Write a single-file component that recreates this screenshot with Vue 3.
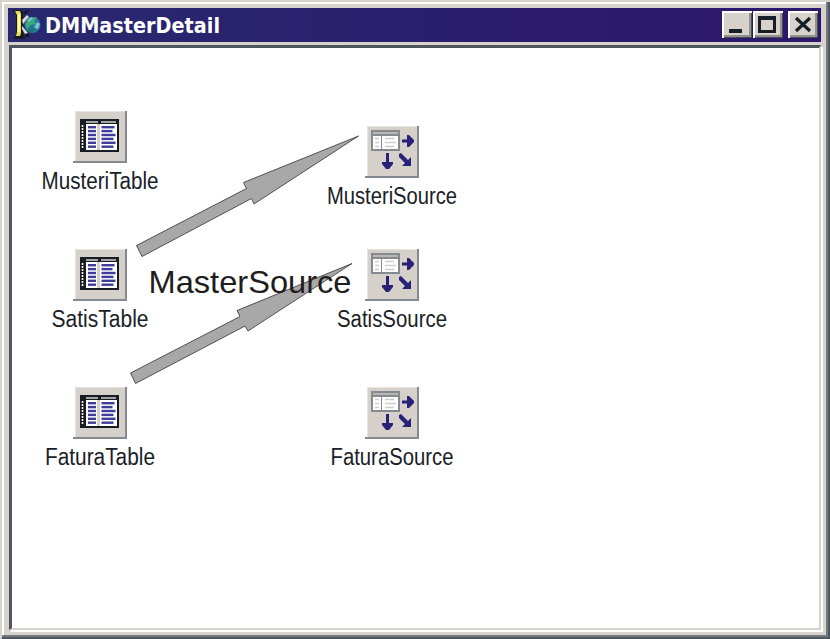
<script setup>
const nodes = [
  { name: 'MusteriTable', kind: 'table', x: 25, y: 111, w: 117 },
  { name: 'SatisTable', kind: 'table', x: 25, y: 249, w: 97 },
  { name: 'FaturaTable', kind: 'table', x: 25, y: 387, w: 110 },
  { name: 'MusteriSource', kind: 'source', x: 317, y: 126, w: 130 },
  { name: 'SatisSource', kind: 'source', x: 317, y: 249, w: 110 },
  { name: 'FaturaSource', kind: 'source', x: 317, y: 387, w: 123 },
]
// Right-hand column line lengths of the table glyph
const rows = [13, 11, 14, 12, 14, 12]
</script>

<template>
  <div class="window">
    <header class="titlebar">
      <svg class="logo" width="30" height="32" viewBox="0 0 30 32">
        <path d="M-1 2h9l2 3v21l2 3v2H0l3-4V6z" fill="#171a22" />
        <path d="M2 3h5l1 3v19l-1 3H3l1-4V7z" fill="#e6df50" />
        <path d="M5 6h2v18H5z" fill="#fff9a0" />
        <path d="M10 5l3-3h4l-5 5zM11 23l2-1 4 7h-4z" fill="#171a22" />
        <path d="M9 12l5-5 2 2-6 7zM9 18l6 7-3 1-3-5z" fill="#dcdccf" />
        <circle cx="19.500" cy="17" r="8" fill="#2877a8" />
        <path d="M12 16l5-6 7-1-3 4 2 3-6 1-2 4-2-3z" fill="#3dac75" />
        <path d="M14 12l4-3 2 1-4 4zM24 14l3 2-2 5-4-1z" fill="#73c9ce" />
        <path d="M17 19l6 1-4 5-4-2z" fill="#187b66" />
      </svg>
      <svg class="caption" width="190" height="34">
        <text x="0" y="24.500" textLength="175" lengthAdjust="spacingAndGlyphs">DMMasterDetail</text>
      </svg>
      <div class="buttons">
        <button class="btn" aria-label="Minimize">
          <svg width="30" height="26"><path d="M7 17h13v4H7z" fill="#171e24" /></svg>
        </button>
        <button class="btn" aria-label="Maximize">
          <svg width="30" height="26"><path d="M5 4h18v17H5zM8 8v10h12V8z" fill="#171e24" fill-rule="evenodd" /></svg>
        </button>
        <button class="btn close" aria-label="Close">
          <svg width="30" height="26"><path d="M8 6l14 13M22 6L8 19" stroke="#171e24" stroke-width="3.2" /></svg>
        </button>
      </div>
    </header>
    <main class="client"></main>

    <div v-for="n in nodes" :key="n.name" class="node" :style="{ left: n.x + 'px', top: n.y + 'px' }">
      <svg class="tile" width="54" height="52" viewBox="0 0 54 52">
        <path d="M2 0h52v52H0v-2h2z" fill="#858a92" />
        <path d="M2 0h50v50H2z" fill="#d5d0ca" />
        <path d="M2.500 50V.5H52" fill="none" stroke="#e7e3df" />
        <g v-if="n.kind === 'table'">
          <path d="M7 8h39v33H7z" fill="#171d23" />
          <path d="M13 10h12v2H13zM28 10h15v2H28z" fill="#a4a5a4" />
          <path d="M13 13h31v26H13z" fill="#fff" />
          <path d="M9.500 14v24" stroke="#fff" stroke-width="1.600" stroke-dasharray="2 1" />
          <path d="M24 13h3v26h-3z" fill="#d5d0ca" />
          <g v-for="(len, i) in rows" :key="i" fill="#3c3d98">
            <rect x="15" :y="15 + i * 3.9" width="8" height="2.4" />
            <rect x="28.500" :y="15 + i * 3.9" :width="len" height="2.4" />
          </g>
        </g>
        <g v-else>
          <path d="M6 4h29v21H6z" fill="#858a90" />
          <path d="M8 6h25v2H8z" fill="#b9b7b3" />
          <path d="M8 10h8v13H8zM17 10h16v13H17z" fill="#fff" />
          <path d="M10 12.5h4M10 16.5h4M10 20.5h4M20 12.5h9M20 16.5h11M20 20.5h9" stroke="#d0ccc6" stroke-width="1.6" />
          <path d="M37 13.500h5V9h2l5 5v2l-5 5h-2v-4.500h-5z" fill="#292078" />
          <path d="M21 27h3v9h4v2l-4 5h-3l-4-5v-2h4z" fill="#292078" />
          <path d="M34 28l2-1 7 7 3-3v9h-9l3-3-6-6z" fill="#292078" />
        </g>
      </svg>
      <svg class="label" width="150" height="35">
        <text :x="75 - n.w / 2" y="25.500" :textLength="n.w" lengthAdjust="spacingAndGlyphs">{{ n.name }}</text>
      </svg>
    </div>

    <svg class="links" width="830" height="639">
      <g fill="#a8a8a8" stroke="#33302f" stroke-width=".8">
        <path d="M136.5 245.5L246.5 188.5L243.5 182.5L358.5 136L254 204L251.5 198.5L142 256.5Z" />
        <path d="M130.5 373L240 316.5L237 310.5L352 263.5L248 331L245 326L135.500 383.500Z" />
      </g>
      <text x="148.500" y="293" textLength="203" lengthAdjust="spacingAndGlyphs">MasterSource</text>
    </svg>
  </div>
</template>

<style>
body { margin: 0; overflow: hidden; background: #d7d2cc; }
</style>

<style scoped>
.window {
  position: relative;
  display: flex;
  flex-direction: column;
  box-sizing: border-box;
  width: 830px;
  height: 639px;
  padding: 8px 9px 9px 8px;
  background: #d7d2cc;
  box-shadow: inset 2px 2px #d7d2cc, inset -2px -2px #4e5860, inset -4px -4px #747b80, inset 4px 4px #fff;
}
.titlebar {
  display: flex;
  flex: none;
  height: 34px;
  margin-bottom: 3px;
  box-sizing: border-box;
  background: linear-gradient(90deg, #29286f, #2c176b);
}
.logo { flex: none; margin-left: 5px; overflow: visible; }
.caption { flex: none; margin-left: 2px; overflow: visible; font: bold 20.500px "DejaVu Sans", sans-serif; fill: #fff; }
.buttons { display: flex; margin: 3px 3px 0 auto; }
.btn {
  width: 30px;
  height: 27px;
  padding: 0;
  margin-right: 1px;
  border: 0;
  background: #d7d2cc;
  box-shadow: inset 2px 2px #fff, inset -1px -1px #454c54, inset -3px -3px #92928f;
}
.btn svg { display: block; }
.close { margin: 0 0 0 4px; }
.client {
  flex: 1;
  margin-left: 1px;
  background: #fff;
  border-style: solid;
  border-width: 3px 2px 2px 3px;
  border-color: #4d565d #d7d2cc #d7d2cc #4d565d;
  box-shadow: 2px 2px #fff;
}
.node {
  position: absolute;
  display: flex;
  flex-direction: column;
  align-items: center;
  width: 150px;
}
.label { overflow: visible; font: 23px "Liberation Sans", sans-serif; fill: #192127; }
.links { position: absolute; left: 0; top: 0; pointer-events: none; }
.links text { font: 32px "Liberation Sans", sans-serif; fill: #211d1c; }
</style>
